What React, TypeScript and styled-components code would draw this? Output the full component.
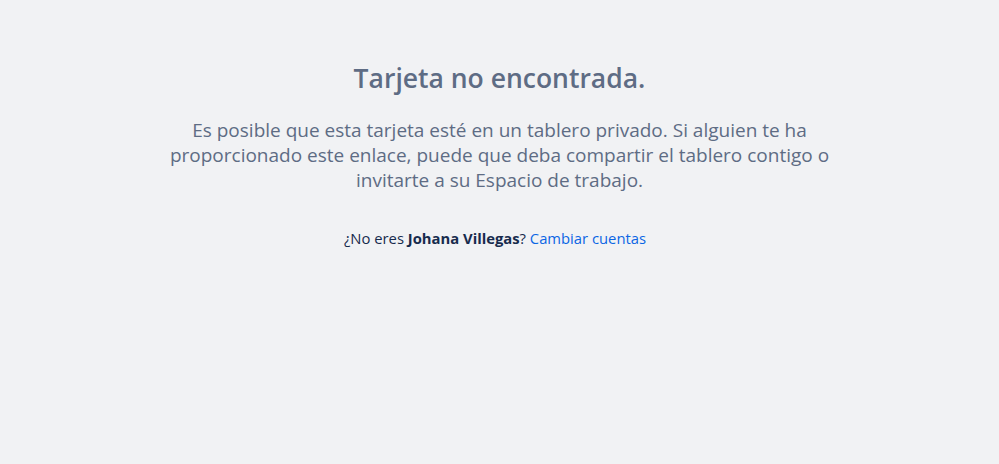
import React from "react";
import styled, { createGlobalStyle } from "styled-components";

const Global = createGlobalStyle`
  html, body { margin: 0; padding: 0; background: #f1f2f4; }
  body { font-family: "Open Sans", "Noto Sans", sans-serif; }
`;

const Page = styled.main`
  min-height: 464px;
  display: flex;
  flex-direction: column;
  align-items: center;
  padding-top: 58px;
  box-sizing: border-box;
`;

const Content = styled.section`
  width: 672px;
  display: flex;
  flex-direction: column;
  align-items: center;
  text-align: center;
`;

const Title = styled.h1`
  margin: 0;
  font-size: 26.5px;
  line-height: 40px;
  font-weight: 600;
  color: #5e6c84;
`;

const Message = styled.p`
  margin: 20px 0 0;
  font-size: 19px;
  line-height: 25px;
  font-weight: 400;
  color: #5e6c84;
`;

const Account = styled.p`
  margin: 35px 0 0;
  padding-right: 9px;
  font-size: 14.8px;
  line-height: 20px;
  color: #172b4d;
  strong { font-weight: 700; }
`;

const Link = styled.a`
  color: #0c66e4;
  text-decoration: none;
`;

export default function App() {
  return (
    <>
      <Global />
      <Page>
        <Content>
          <Title>Tarjeta no encontrada.</Title>
          <Message>
            Es posible que esta tarjeta esté en un tablero privado. Si alguien te ha
            proporcionado este enlace, puede que deba compartir el tablero contigo o
            invitarte a su Espacio de trabajo.
          </Message>
          <Account>
            ¿No eres <strong>Johana Villegas</strong>? <Link href="#">Cambiar cuentas</Link>
          </Account>
        </Content>
      </Page>
    </>
  );
}
